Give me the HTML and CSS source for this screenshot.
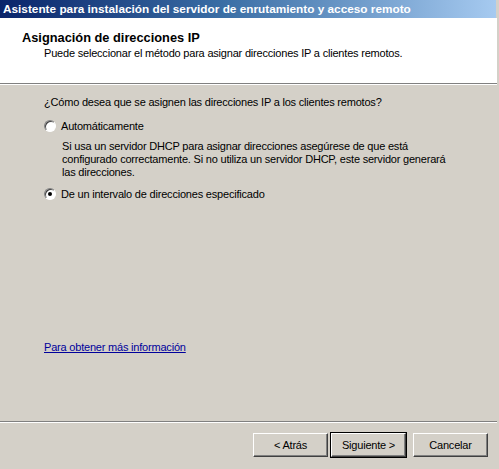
FILE: index.html
```html
<!DOCTYPE html>
<html lang="es">
<head>
<meta charset="utf-8">
<title>Asistente</title>
<link rel="stylesheet" href="styles.css">
</head>
<body>
<div class="window">
  <div class="titlebar">Asistente para instalación del servidor de enrutamiento y acceso remoto</div>
  <div class="client">
    <div class="header">
      <div class="header-title">Asignación de direcciones IP</div>
      <div class="header-sub">Puede seleccionar el método para asignar direcciones IP a clientes remotos.</div>
    </div>
    <div class="content">
      <div class="question">¿Cómo desea que se asignen las direcciones IP a los clientes remotos?</div>
      <label class="option">
        <span class="radio"></span>
        <span>Automáticamente</span>
      </label>
      <div class="desc">Si usa un servidor DHCP para asignar direcciones asegúrese de que está<br>configurado correctamente. Si no utiliza un servidor DHCP, este servidor generará<br>las direcciones.</div>
      <label class="option">
        <span class="radio checked"></span>
        <span>De un intervalo de direcciones especificado</span>
      </label>
      <div class="spacer"></div>
      <a class="more" href="#">Para obtener más información</a>
    </div>
    <div class="footer">
      <button class="btn">&lt; Atrás</button>
      <button class="btn default">Siguiente &gt;</button>
      <button class="btn cancel">Cancelar</button>
    </div>
  </div>
</div>
</body>
</html>
```
FILE: styles.css
```css
html, body {
  margin: 0;
  padding: 0;
  background: #d4d0c8;
}

body {
  width: 499px;
  height: 469px;
  overflow: hidden;
  font-family: "Liberation Sans", Arial, sans-serif;
  font-size: 11px;
  letter-spacing: -0.2px;
  color: #000;
}

.window {
  display: flex;
  flex-direction: column;
  width: 499px;
  height: 469px;
}

.titlebar {
  height: 18px;
  line-height: 18px;
  padding-left: 3px;
  margin-right: 3px;
  background: linear-gradient(to right, #0a246a 0%, #3a6ea5 45%, #a6caf0 100%);
  color: #fff;
  font-weight: bold;
  font-size: 11.8px;
  letter-spacing: 0;
  white-space: nowrap;
}

.client {
  flex: 1;
  display: flex;
  flex-direction: column;
  margin-right: 2px;
}

.header {
  height: 66px;
  background: #fff;
  border-bottom: 1px solid #808080;
  box-shadow: 0 1px 0 #fff;
  padding-left: 22px;
  padding-top: 12px;
  box-sizing: border-box;
}

.header-title {
  font-weight: bold;
  font-size: 12.8px;
  letter-spacing: 0;
  height: 17px;
}

.header-sub {
  padding-left: 22px;
}

.content {
  flex: 1;
  display: flex;
  flex-direction: column;
  align-items: flex-start;
  padding: 12px 0 0 44px;
  border-bottom: 1px solid #808080;
  box-shadow: 0 1px 0 #fff;
}

.question {
  margin-bottom: 11px;
}

.option {
  display: flex;
  align-items: center;
  gap: 5px;
  height: 13px;
}

.radio {
  width: 12px;
  height: 12px;
  border-radius: 50%;
  box-sizing: border-box;
  background: #fff;
  border: 1px solid;
  border-color: #808080 #fff #fff #808080;
  box-shadow: inset 1px 1px 0 #404040;
  position: relative;
}

.radio.checked::after {
  content: "";
  position: absolute;
  left: 3px;
  top: 3px;
  width: 4px;
  height: 4px;
  border-radius: 50%;
  background: #000;
}

.desc {
  padding-left: 18px;
  margin-top: 8px;
  margin-bottom: 8px;
  line-height: 13px;
}

.spacer {
  height: 141px;
}

.more {
  color: #00009c;
  text-decoration: underline;
}

.footer {
  height: 47px;
  display: flex;
  justify-content: flex-end;
  align-items: flex-start;
  padding: 11px 9px 0 0;
  box-sizing: border-box;
}

.btn {
  width: 75px;
  height: 24px;
  padding: 0;
  font-family: inherit;
  font-size: 11px;
  letter-spacing: -0.2px;
  color: #000;
  background: #d4d0c8;
  border: 1px solid;
  border-color: #fff #404040 #404040 #fff;
  box-shadow: inset -1px -1px 0 #808080;
}

.btn.default {
  outline: 1px solid #000;
  margin-left: 3px;
}

.btn.cancel {
  margin-left: 7px;
}
```
